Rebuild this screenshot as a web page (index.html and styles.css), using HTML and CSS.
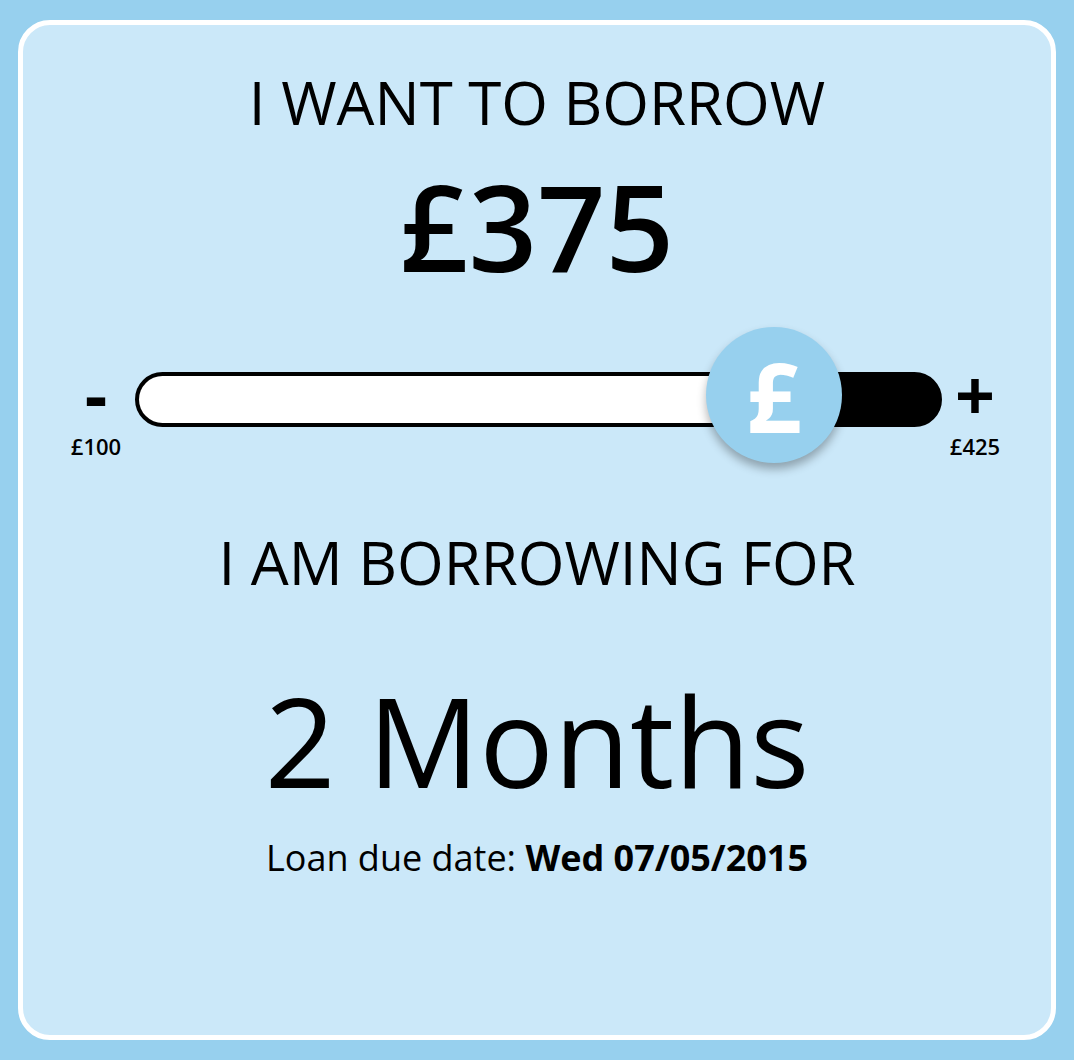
FILE: index.html
```html
<!DOCTYPE html>
<html lang="en">
<head>
<meta charset="utf-8">
<title>Loan calculator</title>
<link rel="stylesheet" href="styles.css">
</head>
<body>
<div class="card">
  <h2 class="heading">I WANT TO BORROW</h2>
  <div class="amount">£375</div>
  <div class="slider">
    <div class="side side-left">
      <span class="sign">-</span>
      <span class="limit">£100</span>
    </div>
    <div class="track">
      <div class="fill"></div>
      <div class="thumb"><span>£</span></div>
    </div>
    <div class="side side-right">
      <span class="sign">+</span>
      <span class="limit">£425</span>
    </div>
  </div>
  <h2 class="heading heading-term">I AM BORROWING FOR</h2>
  <div class="term">2 Months</div>
  <p class="due">Loan due date: <strong>Wed 07/05/2015</strong></p>
</div>
</body>
</html>
```
FILE: styles.css
```css
html, body {
  margin: 0;
  padding: 0;
}
body {
  background: #97d0ee;
  font-family: "Open Sans", "Liberation Sans", sans-serif;
  color: #000;
  padding: 20px 18px;
  height: 1060px;
  box-sizing: border-box;
}
.card {
  box-sizing: border-box;
  height: 1020px;
  border: 5px solid #fff;
  border-radius: 32px;
  background: #cbe8f9;
  padding-top: 47px;
  display: flex;
  flex-direction: column;
  align-items: center;
}
.heading {
  margin: 0;
  font-size: 60px;
  font-weight: 400;
  line-height: 60px;
  text-align: center;
}
.amount {
  margin-top: 34px;
  font-size: 120px;
  font-weight: 600;
  line-height: 120px;
}
.slider {
  margin-top: 83px;
  align-self: stretch;
  display: flex;
  align-items: flex-start;
  padding-left: 48px;
}
.side {
  width: 50px;
  height: 88px;
  display: flex;
  flex-direction: column;
  align-items: center;
}
.sign {
  font-size: 70px;
  font-weight: 700;
  line-height: 50px;
  height: 50px;
}
.limit {
  margin-top: 16px;
  font-size: 22px;
  font-weight: 600;
  line-height: 22px;
}
.side-left {
  margin-right: 14px;
}
.side-right {
  margin-left: 8px;
}
.track {
  position: relative;
  margin-top: 3px;
  width: 807px;
  height: 55px;
  box-sizing: border-box;
  border: 4px solid #000;
  border-radius: 28px;
  background: #000;
}
.fill {
  width: 640px;
  height: 100%;
  background: #fff;
  border-radius: 24px 0 0 24px;
}
.thumb {
  position: absolute;
  left: 567px;
  top: -49px;
  width: 136px;
  height: 136px;
  border-radius: 50%;
  background: #97d0ee;
  box-shadow: 0 6px 10px rgba(0, 0, 0, 0.3);
  display: flex;
  align-items: center;
  justify-content: center;
}
.thumb span {
  color: #fff;
  font-size: 96px;
  font-weight: 700;
  line-height: 1;
  margin-top: 2px;
}
.heading-term {
  margin-top: 75px;
}
.term {
  margin-top: 86px;
  font-size: 124px;
  font-weight: 500;
  line-height: 124px;
}
.due {
  margin: 38px 0 0;
  font-size: 36px;
  line-height: 36px;
}
.due strong {
  font-weight: 700;
}
```
